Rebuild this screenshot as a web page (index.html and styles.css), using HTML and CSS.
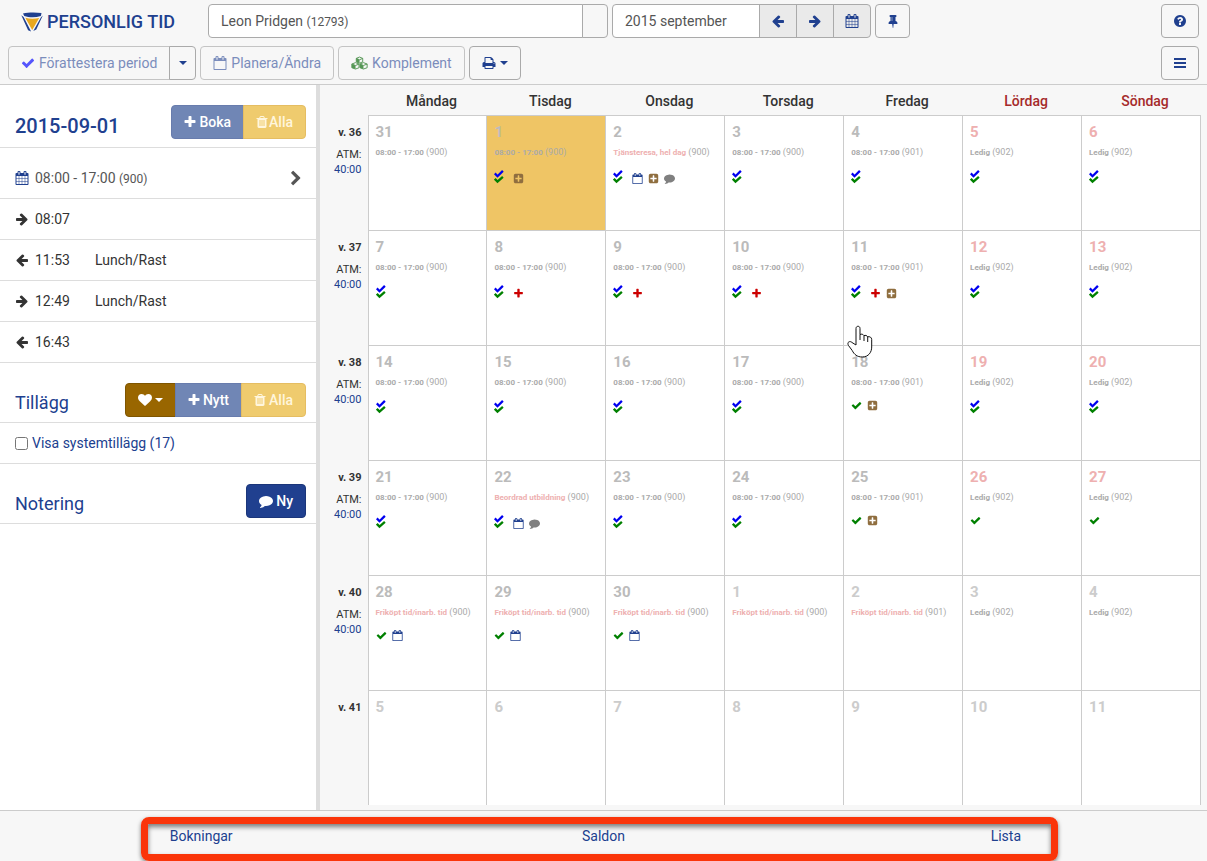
FILE: index.html
```html
<!DOCTYPE html>
<html lang="sv">
<head>
<meta charset="utf-8">
<title>Personlig tid</title>
<link rel="stylesheet" href="styles.css">
</head>
<body>
<svg class="sprite" aria-hidden="true">
  <symbol id="left" viewBox="0 0 1792 1792"><path d="M1664 896v128q0 53-32.5 90.5t-84.5 37.5h-704l293 294q38 36 38 90t-38 90l-75 76q-37 37-90 37-52 0-91-37l-651-652q-37-37-37-90 0-52 37-91l651-650q38-38 91-38 52 0 90 38l75 74q38 38 38 91t-38 91l-293 293h704q52 0 84.5 37.5t32.5 90.5z"/></symbol>
  <symbol id="right" viewBox="0 0 1792 1792"><path d="M1600 960q0 54-37 91l-651 651q-39 37-91 37-51 0-90-37l-75-75q-38-38-38-91t38-91l293-293h-704q-52 0-84.5-37.5t-32.5-90.5v-128q0-53 32.5-90.5t84.5-37.5h704l-293-294q-38-36-38-90t38-90l75-75q38-38 90-38 53 0 91 38l651 651q37 35 37 90z"/></symbol>
  <symbol id="check" viewBox="0 0 1792 1792"><path d="M1671 566q0 40-28 68l-724 724-136 136q-28 28-68 28t-68-28l-136-136-362-362q-28-28-28-68t28-68l136-136q28-28 68-28t68 28l294 295 656-657q28-28 68-28t68 28l136 136q28 28 28 68z"/></symbol>
  <symbol id="plus" viewBox="0 0 1792 1792"><path d="M1600 736v192q0 40-28 68t-68 28h-416v416q0 40-28 68t-68 28h-192q-40 0-68-28t-28-68v-416h-416q-40 0-68-28t-28-68v-192q0-40 28-68t68-28h416v-416q0-40 28-68t68-28h192q40 0 68 28t28 68v416h416q40 0 68 28t28 68z"/></symbol>
  <symbol id="plusbox" viewBox="0 0 1792 1792"><path d="M1408 960v-128q0-26-19-45t-45-19h-320v-320q0-26-19-45t-45-19h-128q-26 0-45 19t-19 45v320h-320q-26 0-45 19t-19 45v128q0 26 19 45t45 19h320v320q0 26 19 45t45 19h128q26 0 45-19t19-45v-320h320q26 0 45-19t19-45zm256-544v960q0 119-84.5 203.5t-203.5 84.5h-960q-119 0-203.5-84.5t-84.5-203.5v-960q0-119 84.5-203.5t203.5-84.5h960q119 0 203.5 84.5t84.5 203.5z"/></symbol>
  <symbol id="cal" viewBox="0 0 1792 1792"><path d="M192 1664h288v-288h-288v288zm352 0h320v-288h-320v288zm-352-352h288v-320h-288v320zm352 0h320v-320h-320v320zm-352-384h288v-288h-288v288zm736 736h320v-288h-320v288zm-384-736h320v-288h-320v288zm768 736h288v-288h-288v288zm-384-352h320v-320h-320v320zm-352-864v-288q0-13-9.5-22.5t-22.5-9.5h-64q-13 0-22.5 9.5t-9.5 22.5v288q0 13 9.5 22.5t22.5 9.5h64q13 0 22.5-9.5t9.5-22.5zm736 864h288v-320h-288v320zm-384-384h320v-288h-320v288zm384 0h288v-288h-288v288zm32-480v-288q0-13-9.5-22.5t-22.5-9.5h-64q-13 0-22.5 9.5t-9.5 22.5v288q0 13 9.5 22.5t22.5 9.5h64q13 0 22.5-9.5t9.5-22.5zm384-64v1280q0 52-38 90t-90 38h-1408q-52 0-90-38t-38-90v-1280q0-52 38-90t90-38h128v-96q0-66 47-113t113-47h64q66 0 113 47t47 113v96h384v-96q0-66 47-113t113-47h64q66 0 113 47t47 113v96h128q52 0 90 38t38 90z"/></symbol>
  <symbol id="calo" viewBox="0 0 1792 1792"><path d="M192 1664h1408v-1024h-1408v1024zm384-1216v-288q0-13-9.5-22.5t-22.5-9.5h-64q-13 0-22.5 9.5t-9.5 22.5v288q0 13 9.5 22.5t22.5 9.5h64q13 0 22.5-9.5t9.5-22.5zm768 0v-288q0-13-9.5-22.5t-22.5-9.5h-64q-13 0-22.5 9.5t-9.5 22.5v288q0 13 9.5 22.5t22.5 9.5h64q13 0 22.5-9.5t9.5-22.5zm384-64v1280q0 52-38 90t-90 38h-1408q-52 0-90-38t-38-90v-1280q0-52 38-90t90-38h128v-96q0-66 47-113t113-47h64q66 0 113 47t47 113v96h384v-96q0-66 47-113t113-47h64q66 0 113 47t47 113v96h128q52 0 90 38t38 90z"/></symbol>
  <symbol id="comment" viewBox="0 0 1792 1792"><path d="M1792 896q0 174-120 321.5t-326 233-450 85.5q-70 0-145-8-198 175-460 242-49 14-114 22-17 2-30.5-9t-17.5-29v-1q-3-4-.5-12t2-10 4.5-9.5l6-9 7-8.5 8-9q7-8 31-34.5t34.5-38 31-39.5 32.5-51 27-59 26-76q-157-89-247.5-220t-90.5-281q0-130 71-248.5t191-204.5 286-136.5 348-50.5q244 0 450 85.5t326 233 120 321.5z"/></symbol>
  <symbol id="heart" viewBox="0 0 1792 1792"><path d="M896 1664q-26 0-44-18l-624-602q-10-8-27.5-26t-55.5-65.5-68-97.5-53.5-121-23.5-138q0-220 127-344t351-124q62 0 126.5 21.5t120 58 95.5 68.5 76 68q36-36 76-68t95.5-68.5 120-58 126.5-21.5q224 0 351 124t127 344q0 221-229 450l-623 600q-18 18-44 18z"/></symbol>
  <symbol id="trash" viewBox="0 0 1792 1792"><path d="M704 1376v-704q0-14-9-23t-23-9h-64q-14 0-23 9t-9 23v704q0 14 9 23t23 9h64q14 0 23-9t9-23zm256 0v-704q0-14-9-23t-23-9h-64q-14 0-23 9t-9 23v704q0 14 9 23t23 9h64q14 0 23-9t9-23zm256 0v-704q0-14-9-23t-23-9h-64q-14 0-23 9t-9 23v704q0 14 9 23t23 9h64q14 0 23-9t9-23zm-544-992h448l-48-117q-7-9-17-11h-317q-10 2-17 11zm928 32v64q0 14-9 23t-23 9h-96v948q0 83-47 143.5t-113 60.5h-832q-66 0-113-58.5t-47-141.5v-952h-96q-14 0-23-9t-9-23v-64q0-14 9-23t23-9h309l70-167q15-37 54-63t79-26h320q40 0 79 26t54 63l70 167h309q14 0 23 9t9 23z"/></symbol>
  <symbol id="pin" viewBox="0 0 1792 1792"><path d="M800 864v-448q0-14-9-23t-23-9-23 9-9 23v448q0 14 9 23t23 9 23-9 9-23zm672 352q0 26-19 45t-45 19h-429l-51 483q-2 12-10.5 20.5t-20.5 8.5h-1q-27 0-32-27l-76-485h-404q-26 0-45-19t-19-45q0-123 78.5-221.5t177.5-98.5v-512q-52 0-90-38t-38-90 38-90 90-38h640q52 0 90 38t38 90-38 90-90 38v512q99 0 177.5 98.5t78.5 221.5z"/></symbol>
  <symbol id="help" viewBox="0 0 1792 1792"><path d="M1024 1376v-192q0-14-9-23t-23-9h-192q-14 0-23 9t-9 23v192q0 14 9 23t23 9h192q14 0 23-9t9-23zm256-672q0-88-55.5-163t-138.5-116-170-41q-243 0-371 213-15 24 8 42l132 100q7 6 19 6 16 0 25-12 53-68 86-92 34-24 86-24 48 0 85.5 26t37.5 59q0 38-20 61t-68 45q-63 28-115.5 86.5t-52.5 125.5v36q0 14 9 23t23 9h192q14 0 23-9t9-23q0-19 21.5-49.5t54.5-49.5q32-18 49-28.5t46-35 44.5-48 28-60.5 12.5-81zm384 192q0 209-103 385.5t-279.5 279.5-385.5 103-385.5-103-279.5-279.5-103-385.5 103-385.5 279.5-279.5 385.5-103 385.5 103 279.5 279.5 103 385.5z"/></symbol>
  <symbol id="print" viewBox="0 0 1792 1792"><path d="M448 1536h896v-256h-896v256zm0-640h896v-384h-160q-40 0-68-28t-28-68v-160h-640v640zm1152 64q0-26-19-45t-45-19-45 19-19 45 19 45 45 19 45-19 19-45zm128 0v416q0 13-9.5 22.5t-22.5 9.5h-224v160q0 40-28 68t-68 28h-960q-40 0-68-28t-28-68v-160h-224q-13 0-22.5-9.5t-9.5-22.5v-416q0-79 56.5-135.5t135.5-56.5h64v-544q0-40 28-68t68-28h672q40 0 88 20t76 48l152 152q28 28 48 76t20 88v256h64q79 0 135.5 56.5t56.5 135.5z"/></symbol>
  <symbol id="chevron" viewBox="0 0 1792 1792"><path d="M1363 941l-742 742q-19 19-45 19t-45-19l-166-166q-19-19-19-45t19-45l531-531-531-531q-19-19-19-45t19-45l166-166q19-19 45-19t45 19l742 742q19 19 19 45t-19 45z"/></symbol>
  <symbol id="bars" viewBox="0 0 14 14"><path d="M1 2h12v2H1zM1 6h12v2H1zM1 10h12v2H1z"/></symbol>
  <symbol id="caret" viewBox="0 0 8 4"><path d="M0 0h8L4 4z"/></symbol>
  <symbol id="cubes" viewBox="0 0 18 14"><g fill="none" stroke="currentColor" stroke-linejoin="round"><path d="M9 .7l3.4 1.4v3.7L9 7.2 5.600 5.800V2.100zM5.600 2.100L9 3.600l3.400-1.500M4.800 6.600l3.700 1.500v3.900l-3.700 1.400-3.900-1.400V8.100zM.9 8.100l3.900 1.500 3.700-1.500M13.200 6.600l3.900 1.500v3.900l-3.900 1.400-3.700-1.400V8.100zM9.500 8.100l3.700 1.500 3.900-1.500"/></g><path d="M5.600 2.100L9 3.600v3.600L5.600 5.800zM.9 8.100l3.900 1.500v3.800L.9 12zM9.500 8.100l3.700 1.500v3.800L9.500 12z"/></symbol>
  <symbol id="double" viewBox="0 0 10 14"><path d="M.8 3.400l2.700 2.800L8.900.9" fill="none" stroke="#0000f0" stroke-width="2.300"/><path d="M.8 8.800l2.700 2.800 5.400-4.800" fill="none" stroke="#008000" stroke-width="2.300"/></symbol>
</svg>

<header class="top">
  <div class="bar">
    <div class="brand">
      <svg class="logo" viewBox="0 0 22 20"><path fill="#20408f" d="M2 1.500C7 .2 15 .2 20.500 1l-.6 3C14 5.800 8 5.500 3.300 4zM.3 3.300l2.300 1.600 7.500 14.500-3-1.200zM21.800 3.500L20 5.200 12.300 19l3-1.500z"/><path fill="#e9a820" d="M4.300 5.800c4.500 1.200 9.500 1.200 13.900.1L11.200 18z"/></svg>
      <h1>PERSONLIG TID</h1>
    </div>
    <div class="group person">
      <div class="field name" tabindex="0">Leon Pridgen <small>(12793)</small></div>
      <button class="btn blank" aria-label="Välj person"></button>
    </div>
    <div class="group">
      <input class="field month" value="2015 september" aria-label="Månad">
      <button class="btn grey" aria-label="Föregående"><svg class="ic"><use href="#left"/></svg></button>
      <button class="btn grey" aria-label="Nästa"><svg class="ic"><use href="#right"/></svg></button>
      <button class="btn grey" aria-label="Kalender"><svg class="ic"><use href="#cal"/></svg></button>
    </div>
    <button class="btn narrow" aria-label="Fäst"><svg class="ic"><use href="#pin"/></svg></button>
    <button class="btn end" aria-label="Hjälp"><svg class="ic"><use href="#help"/></svg></button>
  </div>
  <div class="bar">
    <div class="group">
      <button class="btn dim"><svg class="ic blue"><use href="#check"/></svg>Förattestera period</button>
      <button class="btn slim" aria-label="Fler val"><svg class="caret"><use href="#caret"/></svg></button>
    </div>
    <button class="btn dim"><svg class="ic"><use href="#calo"/></svg>Planera/Ändra</button>
    <button class="btn dim"><svg class="ic wide green"><use href="#cubes"/></svg>Komplement</button>
    <button class="btn" aria-label="Skriv ut"><svg class="ic"><use href="#print"/></svg><svg class="caret"><use href="#caret"/></svg></button>
    <button class="btn end" aria-label="Meny"><svg class="ic"><use href="#bars"/></svg></button>
  </div>
</header>

<main class="main">
  <aside class="side">
    <div class="head first">
      <h2 class="date">2015-09-01</h2>
      <div class="group"><button class="btn solid navy soft"><svg class="ic"><use href="#plus"/></svg>Boka</button><button class="btn solid gold soft tight"><svg class="ic"><use href="#trash"/></svg>Alla</button></div>
    </div>
    <a class="row sched" href="#"><svg class="ic"><use href="#cal"/></svg><span>08:00 - 17:00 <small>(900)</small></span><svg class="ic go"><use href="#chevron"/></svg></a>
    <div class="row"><svg class="ic"><use href="#right"/></svg><span>08:07</span></div>
    <div class="row"><svg class="ic"><use href="#left"/></svg><span class="time">11:53</span><span>Lunch/Rast</span></div>
    <div class="row"><svg class="ic"><use href="#right"/></svg><span class="time">12:49</span><span>Lunch/Rast</span></div>
    <div class="row"><svg class="ic"><use href="#left"/></svg><span>16:43</span></div>
    <div class="head">
      <h2>Tillägg</h2>
      <div class="group"><button class="btn solid brown" aria-label="Favoriter"><svg class="ic"><use href="#heart"/></svg><svg class="caret"><use href="#caret"/></svg></button><button class="btn solid navy soft"><svg class="ic"><use href="#plus"/></svg>Nytt</button><button class="btn solid gold soft"><svg class="ic"><use href="#trash"/></svg>Alla</button></div>
    </div>
    <label class="row opt"><input type="checkbox">Visa systemtillägg (17)</label>
    <div class="head">
      <h2>Notering</h2>
      <button class="btn solid navy"><svg class="ic"><use href="#comment"/></svg>Ny</button>
    </div>
  </aside>

  <section class="calendar">
    <table>
      <thead>
        <tr><th class="wk"></th><th>Måndag</th><th>Tisdag</th><th>Onsdag</th><th>Torsdag</th><th>Fredag</th><th class="free">Lördag</th><th class="free">Söndag</th></tr>
      </thead>
      <tbody>
        <tr>
          <th class="wk"><b>v. 36</b>ATM:<a href="#">40:00</a></th>
          <td><b class="n">31</b><p><b>08:00 - 17:00</b> (900)</p></td>
          <td class="today"><b class="n">1</b><p><b>08:00 - 17:00</b> (900)</p><div class="marks"><svg class="dbl"><use href="#double"/></svg><svg class="mk tan"><use href="#plusbox"/></svg></div></td>
          <td><b class="n">2</b><p><b class="abs">Tjänsteresa, hel dag</b> (900)</p><div class="marks"><svg class="dbl"><use href="#double"/></svg><svg class="mk navy-i"><use href="#calo"/></svg><svg class="mk tan"><use href="#plusbox"/></svg><svg class="mk grey-i"><use href="#comment"/></svg></div></td>
          <td><b class="n">3</b><p><b>08:00 - 17:00</b> (900)</p><div class="marks"><svg class="dbl"><use href="#double"/></svg></div></td>
          <td><b class="n">4</b><p><b>08:00 - 17:00</b> (901)</p><div class="marks"><svg class="dbl"><use href="#double"/></svg></div></td>
          <td><b class="n red">5</b><p><b>Ledig</b> (902)</p><div class="marks"><svg class="dbl"><use href="#double"/></svg></div></td>
          <td><b class="n red">6</b><p><b>Ledig</b> (902)</p><div class="marks"><svg class="dbl"><use href="#double"/></svg></div></td>
        </tr>
        <tr>
          <th class="wk"><b>v. 37</b>ATM:<a href="#">40:00</a></th>
          <td><b class="n">7</b><p><b>08:00 - 17:00</b> (900)</p><div class="marks"><svg class="dbl"><use href="#double"/></svg></div></td>
          <td><b class="n">8</b><p><b>08:00 - 17:00</b> (900)</p><div class="marks"><svg class="dbl"><use href="#double"/></svg><svg class="mk red-i"><use href="#plus"/></svg></div></td>
          <td><b class="n">9</b><p><b>08:00 - 17:00</b> (900)</p><div class="marks"><svg class="dbl"><use href="#double"/></svg><svg class="mk red-i"><use href="#plus"/></svg></div></td>
          <td><b class="n">10</b><p><b>08:00 - 17:00</b> (900)</p><div class="marks"><svg class="dbl"><use href="#double"/></svg><svg class="mk red-i"><use href="#plus"/></svg></div></td>
          <td class="hover"><b class="n">11</b><p><b>08:00 - 17:00</b> (901)</p><div class="marks"><svg class="dbl"><use href="#double"/></svg><svg class="mk red-i"><use href="#plus"/></svg><svg class="mk tan"><use href="#plusbox"/></svg></div><svg class="hand" viewBox="0 0 26 33"><path d="M9 20V3.500C9 .5 13 .5 13 3.500V9.500c1.500-.8 3.200-.2 4 1.100 1.300-.6 3-.1 3.700 1.200 2-.5 4 .5 4 2.700V22c0 5-3 10-9.500 10-5 0-8-2.500-10-6.500L1.500 20.500C-.5 17 3 15.500 5 17.500L9 20M13 9.500V15M17 10.600V16M20.700 11.800V17"/></svg></td>
          <td><b class="n red">12</b><p><b>Ledig</b> (902)</p><div class="marks"><svg class="dbl"><use href="#double"/></svg></div></td>
          <td><b class="n red">13</b><p><b>Ledig</b> (902)</p><div class="marks"><svg class="dbl"><use href="#double"/></svg></div></td>
        </tr>
        <tr>
          <th class="wk"><b>v. 38</b>ATM:<a href="#">40:00</a></th>
          <td><b class="n">14</b><p><b>08:00 - 17:00</b> (900)</p><div class="marks"><svg class="dbl"><use href="#double"/></svg></div></td>
          <td><b class="n">15</b><p><b>08:00 - 17:00</b> (900)</p><div class="marks"><svg class="dbl"><use href="#double"/></svg></div></td>
          <td><b class="n">16</b><p><b>08:00 - 17:00</b> (900)</p><div class="marks"><svg class="dbl"><use href="#double"/></svg></div></td>
          <td><b class="n">17</b><p><b>08:00 - 17:00</b> (900)</p><div class="marks"><svg class="dbl"><use href="#double"/></svg></div></td>
          <td><b class="n">18</b><p><b>08:00 - 17:00</b> (901)</p><div class="marks"><svg class="mk ok"><use href="#check"/></svg><svg class="mk tan"><use href="#plusbox"/></svg></div></td>
          <td><b class="n red">19</b><p><b>Ledig</b> (902)</p><div class="marks"><svg class="dbl"><use href="#double"/></svg></div></td>
          <td><b class="n red">20</b><p><b>Ledig</b> (902)</p><div class="marks"><svg class="dbl"><use href="#double"/></svg></div></td>
        </tr>
        <tr>
          <th class="wk"><b>v. 39</b>ATM:<a href="#">40:00</a></th>
          <td><b class="n">21</b><p><b>08:00 - 17:00</b> (900)</p><div class="marks"><svg class="dbl"><use href="#double"/></svg></div></td>
          <td><b class="n">22</b><p><b class="abs">Beordrad utbildning</b> (900)</p><div class="marks"><svg class="dbl"><use href="#double"/></svg><svg class="mk navy-i"><use href="#calo"/></svg><svg class="mk grey-i"><use href="#comment"/></svg></div></td>
          <td><b class="n">23</b><p><b>08:00 - 17:00</b> (900)</p><div class="marks"><svg class="dbl"><use href="#double"/></svg></div></td>
          <td><b class="n">24</b><p><b>08:00 - 17:00</b> (900)</p><div class="marks"><svg class="dbl"><use href="#double"/></svg></div></td>
          <td><b class="n">25</b><p><b>08:00 - 17:00</b> (901)</p><div class="marks"><svg class="mk ok"><use href="#check"/></svg><svg class="mk tan"><use href="#plusbox"/></svg></div></td>
          <td><b class="n red">26</b><p><b>Ledig</b> (902)</p><div class="marks"><svg class="mk ok"><use href="#check"/></svg></div></td>
          <td><b class="n red">27</b><p><b>Ledig</b> (902)</p><div class="marks"><svg class="mk ok"><use href="#check"/></svg></div></td>
        </tr>
        <tr>
          <th class="wk"><b>v. 40</b>ATM:<a href="#">40:00</a></th>
          <td><b class="n">28</b><p><b class="abs">Friköpt tid/inarb. tid</b> (900)</p><div class="marks"><svg class="mk ok"><use href="#check"/></svg><svg class="mk navy-i"><use href="#calo"/></svg></div></td>
          <td><b class="n">29</b><p><b class="abs">Friköpt tid/inarb. tid</b> (900)</p><div class="marks"><svg class="mk ok"><use href="#check"/></svg><svg class="mk navy-i"><use href="#calo"/></svg></div></td>
          <td><b class="n">30</b><p><b class="abs">Friköpt tid/inarb. tid</b> (900)</p><div class="marks"><svg class="mk ok"><use href="#check"/></svg><svg class="mk navy-i"><use href="#calo"/></svg></div></td>
          <td><b class="n next">1</b><p><b class="abs">Friköpt tid/inarb. tid</b> (900)</p></td>
          <td><b class="n next">2</b><p><b class="abs">Friköpt tid/inarb. tid</b> (901)</p></td>
          <td><b class="n next">3</b><p><b>Ledig</b> (902)</p></td>
          <td><b class="n next">4</b><p><b>Ledig</b> (902)</p></td>
        </tr>
        <tr>
          <th class="wk"><b>v. 41</b></th>
          <td><b class="n next">5</b></td><td><b class="n next">6</b></td><td><b class="n next">7</b></td><td><b class="n next">8</b></td><td><b class="n next">9</b></td><td><b class="n next">10</b></td><td><b class="n next">11</b></td>
        </tr>
      </tbody>
    </table>
  </section>
</main>

<footer class="tabs">
  <a href="#">Bokningar</a><a href="#">Saldon</a><a href="#">Lista</a>
  <div class="frame"></div>
</footer>
</body>
</html>
```
FILE: styles.css
```css
* { box-sizing: border-box; }
body {
  margin: 0;
  height: 100vh;
  display: flex;
  flex-direction: column;
  background: #f7f7f7;
  color: #333;
  font: 14px/20px Roboto, sans-serif;
}
h1, h2, p { margin: 0; }
a { color: #20408f; text-decoration: none; }
button, input { font: inherit; }
svg { fill: currentColor; flex: none; }
small { font-size: 12px; line-height: 1; }
.sprite { position: absolute; width: 0; height: 0; }
.ic { width: 14px; height: 14px; }
.ic.wide { width: 17px; }
.caret { width: 8px; height: 4px; }
.blue { color: #0000ff; }
.green { color: #006400; }

.top {
  display: flex;
  flex-direction: column;
  gap: 8px;
  padding: 4px 8px;
  border-bottom: 1px solid #ccc;
}
.bar { display: flex; gap: 4px; }
.brand { display: flex; align-items: center; gap: 4px; width: 196px; padding: 2px 0 0 13px; }
.brand h1 { font-size: 18px; font-weight: 500; line-height: 24px; color: #20408f; white-space: nowrap; }
.logo { width: 22px; height: 20px; }

.group { display: flex; }
.group > * + * { margin-left: -1px; }
.group > :not(:first-child) { border-top-left-radius: 0; border-bottom-left-radius: 0; }
.group > :not(:last-child) { border-top-right-radius: 0; border-bottom-right-radius: 0; }
.person { flex: 0 1 400px; }
.field {
  height: 34px;
  padding: 6px 12px;
  border: 1px solid #aaa;
  border-radius: 4px;
  background: #fff;
  color: #555;
}
.name { flex: 1; }
.month { width: 148px; }
.btn {
  display: flex;
  align-items: center;
  justify-content: center;
  gap: 4px;
  height: 34px;
  padding: 0 12px;
  border: 1px solid #aaa;
  border-radius: 4px;
  background: #f7f7f7;
  color: #20408f;
  white-space: nowrap;
}
.blank { width: 26px; }
.grey { width: 38px; background: #eaeaea; }
.narrow { width: 35px; }
.end { width: 38px; margin-left: auto; }
.slim { width: 27px; padding: 0; }
.dim { color: #7b8dbc; border-color: #c4c4c4; }
.dim .blue { opacity: .65; }
.dim .green { opacity: .65; }
.solid { gap: 3px; color: #fff; font-weight: 500; }
.soft .ic { margin: 0 -1px; }
.solid.navy { background: #20408f; border-color: #1b367a; }
.solid.navy.soft { background: #7086b5; border-color: #687cad; }
.solid.gold { background: #efcb6e; border-color: #e5bd62; color: #fff6dd; }
.solid.brown { background: #996600; border-color: #7f5500; }
.solid.tight { gap: 1px; }

.main { flex: 1; min-height: 0; display: flex; }
.side { width: 320px; background: #fff; border-right: 4px solid #ddd; }
.head {
  display: flex;
  justify-content: space-between;
  padding: 20px 10px 5px 15px;
  border-bottom: 1px solid #ddd;
}
.head.first { padding-bottom: 8px; }
.head h2 { font-size: 18px; font-weight: 400; line-height: 40px; height: 34px; color: #20408f; }
.head .date { font-size: 20px; font-weight: 500; line-height: 42px; }
.row {
  display: flex;
  align-items: center;
  padding: 10px 15px;
  border-bottom: 1px solid #ddd;
}
.row > .ic { margin-right: 6px; }
.row > .go { width: 16px; height: 16px; margin: 0 -3px 0 auto; }
.sched { padding-top: 20px; color: #555; }
.sched > .ic:first-child { color: #20408f; }
.sched > .go { color: #555; }
.time { width: 60px; }
.opt { color: #20408f; }
.opt input { width: 13px; height: 13px; margin: 0 4px 0 0; }

.calendar { flex: 1; padding: 0 6px 6px 0; }
table { width: 100%; height: 100%; table-layout: fixed; border-collapse: collapse; }
thead th { height: 30px; padding: 2px 0 0 8px; font-size: 14px; font-weight: 500; }
thead th.wk { width: 48px; }
th.free { color: #a52a2a; }
tbody tr { height: 115px; }
td, tbody .wk { vertical-align: top; }
td { padding: 6px 4px 6px 7px; border: 1px solid #ccc; background: #fff; color: #aaa; }
tbody tr:last-child td { border-bottom: 0; }
tbody .wk { padding: 8px 6px 0 0; text-align: right; font-size: 11px; font-weight: 400; line-height: 15px; }
.wk b { display: block; font-weight: 700; line-height: 20px; margin-bottom: 4px; }
.wk a { display: block; }
.n { display: block; font-size: 15px; line-height: 20px; color: #bbb; }
.n.red { color: #eeb0b0; }
.n.next { color: #ccc; }
td p { font-size: 9px; line-height: 12px; margin: 4px 0 11px; white-space: nowrap; }
td p b { font-size: 8px; color: #aaa; }
td .abs { color: #eeb0b0; }
td.today { background: #efc565; }
.marks { display: flex; align-items: flex-end; gap: 5px; }
.dbl { width: 10px; height: 14px; margin-right: 4px; }
.mk { width: 11px; height: 11px; }
.tan { color: #8f6e3f; }
.grey-i { color: #808080; }
.navy-i { color: #20408f; }
.red-i { color: #c00; }
.ok { color: #008000; }
.hover { position: relative; }
.hand { position: absolute; left: 3px; top: 94px; width: 26px; height: 33px; fill: #fff; stroke: #111; z-index: 1; }

.tabs {
  position: relative;
  display: grid;
  grid-template-columns: repeat(3, 1fr);
  padding: 15px 0;
  border-top: 1px solid #ccc;
  text-align: center;
}
.frame {
  position: absolute;
  inset: 6px 149px 0 141px;
  border: 7px solid #fa350a;
  border-radius: 8px;
  box-shadow: 0 2px 4px rgba(0, 0, 0, .5), inset 0 3px 5px rgba(0, 0, 0, .5);
  pointer-events: none;
}
```
